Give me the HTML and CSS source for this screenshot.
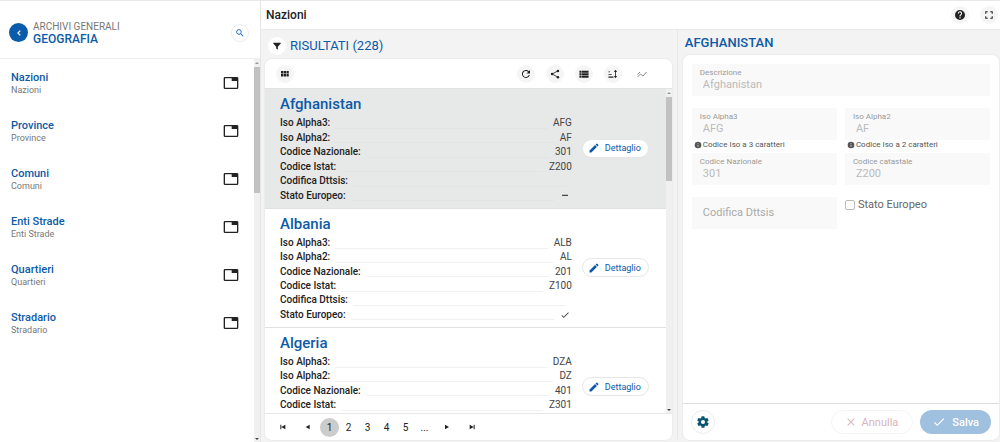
FILE: index.html
```html
<!DOCTYPE html>
<html lang="it">
<head>
<meta charset="utf-8">
<title>Nazioni</title>
<meta name="viewport" content="width=device-width, initial-scale=1">
<link rel="stylesheet" href="styles.css">
</head>
<body>
<svg class="sprite" aria-hidden="true">
  <symbol id="tab" viewBox="0 0 24 24"><path d="M21 3H3a2 2 0 0 0-2 2v14a2 2 0 0 0 2 2h18a2 2 0 0 0 2-2V5a2 2 0 0 0-2-2zm0 16H3V5h10v4h8v10z"/></symbol>
  <symbol id="pencil" viewBox="0 0 24 24"><path d="M3 17.2V21h3.8L17.8 9.900l-3.700-3.700zM20.700 7a1 1 0 0 0 0-1.400l-2.300-2.300a1 1 0 0 0-1.400 0l-1.900 1.800 3.800 3.800z"/></symbol>
  <symbol id="check" viewBox="0 0 24 24"><path d="M9 16.2 4.800 12l-1.400 1.400L9 19 21 7l-1.400-1.400z"/></symbol>
  <symbol id="info" viewBox="0 0 24 24"><path d="M12 2a10 10 0 1 0 0 20 10 10 0 0 0 0-20zm1 15h-2v-6h2zm0-8h-2V7h2z"/></symbol>
</svg>
<div class="app">
  <aside class="sidebar">
    <header class="side-head">
      <button class="back" aria-label="Indietro"><svg class="icon-10" viewBox="0 0 24 24"><path d="M15.4 7.4 14 6l-6 6 6 6 1.4-1.4L10.8 12z" stroke="currentColor" stroke-width="1"/></svg></button>
      <div class="side-titles">
        <p class="side-over">ARCHIVI GENERALI</p>
        <h2 class="side-title">GEOGRAFIA</h2>
      </div>
      <button class="round outlined blue" aria-label="Cerca"><svg class="icon-10" viewBox="0 0 24 24"><path d="M15.5 14h-.8l-.3-.3a6.5 6.5 0 1 0-.7.7l.3.3v.8l5 5 1.5-1.5zm-6 0a4.5 4.5 0 1 1 0-9 4.5 4.5 0 0 1 0 9z"/></svg></button>
    </header>
    <div class="scroller">
      <nav class="menu">
        <div class="menu-row"><a class="menu-link" href="#nazioni"><strong>Nazioni</strong><span>Nazioni</span></a><button class="tab-btn" aria-label="Apri Nazioni in una scheda"><svg class="icon-16"><use href="#tab"/></svg></button></div>
        <div class="menu-row"><a class="menu-link" href="#province"><strong>Province</strong><span>Province</span></a><button class="tab-btn" aria-label="Apri Province in una scheda"><svg class="icon-16"><use href="#tab"/></svg></button></div>
        <div class="menu-row"><a class="menu-link" href="#comuni"><strong>Comuni</strong><span>Comuni</span></a><button class="tab-btn" aria-label="Apri Comuni in una scheda"><svg class="icon-16"><use href="#tab"/></svg></button></div>
        <div class="menu-row"><a class="menu-link" href="#enti"><strong>Enti Strade</strong><span>Enti Strade</span></a><button class="tab-btn" aria-label="Apri Enti Strade in una scheda"><svg class="icon-16"><use href="#tab"/></svg></button></div>
        <div class="menu-row"><a class="menu-link" href="#quartieri"><strong>Quartieri</strong><span>Quartieri</span></a><button class="tab-btn" aria-label="Apri Quartieri in una scheda"><svg class="icon-16"><use href="#tab"/></svg></button></div>
        <div class="menu-row"><a class="menu-link" href="#stradario"><strong>Stradario</strong><span>Stradario</span></a><button class="tab-btn" aria-label="Apri Stradario in una scheda"><svg class="icon-16"><use href="#tab"/></svg></button></div>
      </nav>
      <div class="bar" aria-hidden="true"><i class="up"></i><i class="thumb side-thumb"></i><i class="down"></i></div>
    </div>
  </aside>

  <main class="main">
    <header class="topbar">
      <h1 class="page-title">Nazioni</h1>
      <button class="round" aria-label="Aiuto"><svg class="icon-12" viewBox="0 0 24 24"><path d="M12 2a10 10 0 1 0 0 20 10 10 0 0 0 0-20zm1.200 17h-2.400v-2.400h2.400zm2.300-7.800-.9.900c-.9.900-1.400 1.500-1.400 3h-2.400v-.6c0-1.100.5-2.100 1.200-2.800l1.300-1.300A2 2 0 1 0 10 9H7.700a4.300 4.300 0 1 1 7.800 2.200z"/></svg></button>
      <button class="round" aria-label="Schermo intero"><svg class="icon-10" viewBox="0 0 24 24"><path d="M3 3h6v2.500H5.500V9H3zm12 0h6v6h-2.500V5.500H15zM3 15h2.500v3.500H9V21H3zm15.500 0H21v6h-6v-2.500h3.500z"/></svg></button>
    </header>

    <div class="panes">
      <section class="results">
        <div class="results-head">
          <button class="round white" aria-label="Filtra"><svg class="icon-10" viewBox="0 0 24 24"><path d="M3 4h18v2l-7 8v7l-4-3v-4L3 6z"/></svg></button>
          <h2 class="pane-title">RISULTATI (228)</h2>
        </div>
        <div class="card">
          <div class="toolbar">
            <button class="round first" aria-label="Griglia"><svg class="icon-12" viewBox="0 0 24 24"><path d="M4 6h4.500v5H4zm5.500 0H14v5H9.500zm5.500 0h4.500v5H15zM4 12h4.500v5H4zm5.500 0H14v5H9.500zm5.500 0h4.500v5H15z"/></svg></button>
            <button class="round" aria-label="Aggiorna"><svg class="icon-12" viewBox="0 0 24 24"><path d="M17.700 6.300A8 8 0 1 0 19.700 14h-2.100a6 6 0 1 1-1.400-6.200L13 11h7V4z"/></svg></button>
            <button class="round" aria-label="Condividi"><svg class="icon-10" viewBox="0 0 24 24"><path d="m19 4.500-14 7.500 14 7.500" fill="none" stroke="currentColor" stroke-width="2"/><circle cx="19" cy="4.500" r="3"/><circle cx="5" cy="12" r="3"/><circle cx="19" cy="19.500" r="3"/></svg></button>
            <button class="round" aria-label="Elenco"><svg class="icon-10" viewBox="0 0 24 24"><path d="M1 4h4v5H1zm5 0h17v5H6zM1 10h4v5H1zm5 0h17v5H6zM1 16h4v5H1zm5 0h17v5H6z"/></svg></button>
            <button class="round" aria-label="Ordina"><svg class="icon-10" viewBox="0 0 24 24"><path d="M1 6h4v2H1zm0 6h8v2H1zm0 6h12v3H1zM17 7h-3l4-5 4 5h-3v10h3l-4 5-4-5h3z"/></svg></button>
            <button class="round muted" aria-label="Grafico" disabled><svg class="icon-12" viewBox="0 0 24 24"><path d="m3 18 6-6 5 4 7-8M3 13l5-5" fill="none" stroke="currentColor" stroke-width="2"/></svg></button>
          </div>
          <div class="scroller">
            <div class="list">
              <article class="item selected">
                <div class="item-body">
                  <h3 class="item-title">Afghanistan</h3>
                  <dl class="facts">
                    <div><dt>Iso Alpha3:</dt><dd>AFG</dd></div>
                    <div><dt>Iso Alpha2:</dt><dd>AF</dd></div>
                    <div><dt>Codice Nazionale:</dt><dd>301</dd></div>
                    <div><dt>Codice Istat:</dt><dd>Z200</dd></div>
                    <div><dt>Codifica Dttsis:</dt><dd></dd></div>
                    <div><dt>Stato Europeo:</dt><dd class="mark"><svg class="icon-10" viewBox="0 0 24 24" role="img" aria-label="No"><path d="M5 9h14v3H5z"/></svg></dd></div>
                  </dl>
                </div>
                <button class="detail-btn"><svg class="icon-12"><use href="#pencil"/></svg>Dettaglio</button>
              </article>
              <article class="item">
                <div class="item-body">
                  <h3 class="item-title">Albania</h3>
                  <dl class="facts">
                    <div><dt>Iso Alpha3:</dt><dd>ALB</dd></div>
                    <div><dt>Iso Alpha2:</dt><dd>AL</dd></div>
                    <div><dt>Codice Nazionale:</dt><dd>201</dd></div>
                    <div><dt>Codice Istat:</dt><dd>Z100</dd></div>
                    <div><dt>Codifica Dttsis:</dt><dd></dd></div>
                    <div><dt>Stato Europeo:</dt><dd class="mark"><svg class="icon-10" role="img" aria-label="Sì"><use href="#check"/></svg></dd></div>
                  </dl>
                </div>
                <button class="detail-btn"><svg class="icon-12"><use href="#pencil"/></svg>Dettaglio</button>
              </article>
              <article class="item">
                <div class="item-body">
                  <h3 class="item-title">Algeria</h3>
                  <dl class="facts">
                    <div><dt>Iso Alpha3:</dt><dd>DZA</dd></div>
                    <div><dt>Iso Alpha2:</dt><dd>DZ</dd></div>
                    <div><dt>Codice Nazionale:</dt><dd>401</dd></div>
                    <div><dt>Codice Istat:</dt><dd>Z301</dd></div>
                    <div></div>
                    <div></div>
                  </dl>
                </div>
                <button class="detail-btn"><svg class="icon-12"><use href="#pencil"/></svg>Dettaglio</button>
              </article>
            </div>
            <div class="bar" aria-hidden="true"><i class="up"></i><i class="thumb list-thumb"></i><i class="down"></i></div>
          </div>
          <nav class="pager" aria-label="Pagine">
            <button class="step" aria-label="Prima pagina"><svg class="icon-8" viewBox="0 0 24 24"><path d="M4 5h3v14H4zm15 0v14L7 12z"/></svg></button>
            <button class="step" aria-label="Pagina precedente"><svg class="icon-8" viewBox="0 0 24 24"><path d="M17 5v14L5 12z"/></svg></button>
            <button class="page current" aria-current="page">1</button>
            <button class="page">2</button>
            <button class="page">3</button>
            <button class="page">4</button>
            <button class="page">5</button>
            <button class="page">...</button>
            <button class="step" aria-label="Pagina successiva"><svg class="icon-8" viewBox="0 0 24 24"><path d="M6 5v14l12-7z"/></svg></button>
            <button class="step" aria-label="Ultima pagina"><svg class="icon-8" viewBox="0 0 24 24"><path d="M17 5h3v14h-3zM5 5v14l12-7z"/></svg></button>
          </nav>
        </div>
      </section>

      <section class="detail">
        <h2 class="pane-title detail-title">AFGHANISTAN</h2>
        <form class="card">
          <div class="fields">
            <div class="field wide"><label for="desc">Descrizione</label><input id="desc" value="Afghanistan" disabled></div>
            <div class="cell">
              <div class="field"><label for="a3">Iso Alpha3</label><input id="a3" value="AFG" disabled></div>
              <p class="hint"><svg class="icon-8"><use href="#info"/></svg>Codice Iso a 3 caratteri</p>
            </div>
            <div class="cell">
              <div class="field"><label for="a2">Iso Alpha2</label><input id="a2" value="AF" disabled></div>
              <p class="hint"><svg class="icon-8"><use href="#info"/></svg>Codice Iso a 2 caratteri</p>
            </div>
            <div class="field"><label for="naz">Codice Nazionale</label><input id="naz" value="301" disabled></div>
            <div class="field"><label for="cat">Codice catastale</label><input id="cat" value="Z200" disabled></div>
            <div class="field empty"><input id="dtt" aria-label="Codifica Dttsis" placeholder="Codifica Dttsis" disabled></div>
            <label class="check"><input type="checkbox" disabled>Stato Europeo</label>
          </div>
          <footer class="actions">
            <button type="button" class="round outlined large teal" aria-label="Impostazioni"><svg class="icon-14" viewBox="0 0 24 24"><path d="M19.400 13a7.500 7.500 0 0 0 0-2l2.100-1.600a.5.5 0 0 0 .1-.6l-2-3.500a.5.5 0 0 0-.6-.2l-2.500 1a7 7 0 0 0-1.700-1l-.4-2.700a.5.5 0 0 0-.5-.4h-4a.5.5 0 0 0-.5.4L9 5.100a8 8 0 0 0-1.700 1l-2.500-1a.5.5 0 0 0-.6.2l-2 3.500a.5.5 0 0 0 .1.600L4.500 11a7.500 7.500 0 0 0 0 2l-2.100 1.600a.5.5 0 0 0-.1.600l2 3.500c.1.200.4.300.6.200l2.500-1a7 7 0 0 0 1.700 1l.4 2.700c0 .2.200.4.500.4h4c.2 0 .5-.2.5-.4l.4-2.700a7 7 0 0 0 1.700-1l2.500 1c.2.100.5 0 .6-.2l2-3.500a.5.500 0 0 0-.1-.6zM12 15.500a3.500 3.500 0 1 1 0-7 3.500 3.500 0 0 1 0 7z"/></svg></button>
            <button type="button" class="pill cancel" disabled><svg class="icon-10" viewBox="0 0 24 24"><path d="m4 4 16 16M20 4 4 20" stroke="currentColor" stroke-width="2.500"/></svg>Annulla</button>
            <button type="button" class="pill save" disabled><svg class="icon-14"><use href="#check"/></svg>Salva</button>
          </footer>
        </form>
      </section>
    </div>
  </main>
</div>
</body>
</html>
```
FILE: styles.css
```css
* { box-sizing: border-box; }

body {
  margin: 0;
  font-family: Roboto, "Liberation Sans", sans-serif;
  font-size: 10px;
  color: #333;
  background: #f3f3f3;
}

h1, h2, h3, p, dl, dd { margin: 0; }

button {
  font: inherit;
  color: inherit;
  border: 0;
  padding: 0;
  background: none;
  display: flex;
  align-items: center;
  justify-content: center;
}

input { font: inherit; margin: 0; }
svg { fill: currentColor; flex: none; }

.sprite { position: absolute; width: 0; height: 0; }
.icon-8 { width: 8px; height: 8px; }
.icon-10 { width: 10px; height: 10px; }
.icon-12 { width: 12px; height: 12px; }
.icon-14 { width: 14px; height: 14px; }
.icon-16 { width: 16px; height: 16px; }

.app {
  display: flex;
  height: 100vh;
  border-top: 1px solid #e8e8e8;
}

/* Round icon buttons */
.round {
  width: 18px;
  height: 18px;
  flex: none;
  border-radius: 50%;
  background: #f5f5f5;
  color: #222;
}
.white { background: #fff; }
.outlined { background: #fff; border: 1px solid #ececec; }
.large { width: 24px; height: 24px; }
.blue { color: #0d5fae; }
.teal { color: #0b5570; }
.muted { color: #888; background: none; }

/* Scroll areas */
.scroller { display: flex; flex: 1; min-height: 0; overflow: hidden; }
.bar {
  width: 6px;
  flex: none;
  display: flex;
  flex-direction: column;
  align-items: center;
  background: #f0f0f0;
}
.up, .down { border: 2px solid transparent; }
.up { border-bottom-color: #999; margin: 1px 0 3px; }
.down { border-top-color: #444; margin-top: auto; }
.thumb { width: 6px; background: #c1c1c1; }
.side-thumb { height: 33%; }
.list-thumb { height: 26%; }

/* Sidebar */
.sidebar {
  flex: 0 0 26%;
  display: flex;
  flex-direction: column;
  background: #fff;
}
.side-head {
  display: flex;
  align-items: center;
  gap: 5px;
  height: 58px;
  padding: 6px 11px 0 9px;
  border-bottom: 1px solid #eee;
}
.back {
  width: 19px;
  height: 19px;
  border-radius: 50%;
  background: #0a5cab;
  color: #fff;
}
.side-titles { flex: 1; line-height: 12px; }
.side-over { font-size: 10px; color: #777; }
.side-title { font-size: 12px; font-weight: 500; color: #0d5aa7; }

.menu { flex: 1; }
.menu-row {
  display: flex;
  align-items: center;
  height: 48px;
  padding: 0 15px 0 11px;
}
.menu-link {
  flex: 1;
  display: flex;
  flex-direction: column;
  padding-top: 1px;
  font-size: 9px;
  line-height: 12px;
  color: #777;
  text-decoration: none;
}
.menu-link strong { font-size: 11px; font-weight: 500; color: #0d5aa7; }
.tab-btn { color: #222; }

/* Main area */
.main {
  flex: 1;
  min-width: 0;
  display: flex;
  flex-direction: column;
  border-left: 1px solid #e6e6e6;
}
.topbar {
  display: flex;
  align-items: center;
  gap: 11px;
  height: 29px;
  padding: 0 2px 0 5px;
  background: #fff;
  border-bottom: 1px solid #e8e8e8;
}
.page-title { flex: 1; font-size: 12px; font-weight: 500; color: #222; }

.panes { display: flex; flex: 1; min-height: 0; padding-bottom: 1px; }
.pane-title { font-size: 13px; line-height: 16px; font-weight: 400; color: #0d5aa7; }
.card {
  flex: 1;
  min-height: 0;
  display: flex;
  flex-direction: column;
  overflow: hidden;
  background: #fff;
  border: 1px solid #ececec;
  border-radius: 8px;
}

/* Results */
.results {
  flex: 0 0 calc(56% + 3px);
  display: flex;
  flex-direction: column;
  padding: 0 4px 0 3px;
  border-right: 1px solid #e8e8e8;
}
.results-head { display: flex; align-items: center; gap: 4px; height: 28px; padding: 4px 4px 0; }

.toolbar {
  display: flex;
  align-items: center;
  gap: 11px;
  height: 30px;
  padding: 0 21px 0 11px;
  border-bottom: 1px solid #e2e2e2;
}
.first { margin-right: auto; }

.list { flex: 1; min-width: 0; }
.item {
  display: flex;
  align-items: center;
  gap: 10px;
  height: 120px;
  padding: 4px 17px 5px 15px;
  border-bottom: 1px solid #e2e2e2;
}
.item + .item { height: 119px; }
.selected { background: #e7e8e8; }
.item-body { flex: 1; height: 100%; display: flex; flex-direction: column; }
.item-title { font-size: 15px; line-height: 22px; font-weight: 500; color: #0d5aa7; padding-bottom: 1px; }
.facts { flex: 1; display: grid; grid-auto-rows: 1fr; }
.facts div { display: flex; align-items: center; line-height: 14px; }
.facts dt { font-weight: 500; color: #222; }
.facts dd { flex: 1; display: flex; align-items: center; color: #444; }
.facts dd::before {
  content: "";
  flex: 1;
  margin: 10px 6px 0 5px;
  border-top: 1px solid #f1f1f1;
}
.selected dd::before { border-color: #e2e3e3; }
.mark { padding-right: 2px; }
.detail-btn {
  width: 67px;
  height: 19px;
  gap: 5px;
  padding-right: 2px;
  flex: none;
  border: 1px solid #e6e6e6;
  border-radius: 10px;
  background: #fff;
  font-size: 9px;
  color: #0d5aa7;
}

.pager {
  display: flex;
  align-items: center;
  height: 27px;
  padding-left: 8px;
  border-top: 1px solid #e8e8e8;
  color: #222;
}
.step { width: 19px; height: 19px; }
.page { width: 19px; height: 19px; border-radius: 50%; }
.step + .step { margin-left: 6px; }
.step + .page { margin-left: 3px; }
.page + .step { margin-left: 3px; }
.current { background: #ccc; }

/* Detail form */
.detail { flex: 1; min-width: 0; display: flex; flex-direction: column; padding-left: 4px; }
.detail-title { padding: 5px 0 3px 3px; font-weight: 500; }
.fields {
  flex: 1;
  display: grid;
  grid-template-columns: 1fr 1fr;
  align-content: start;
  column-gap: 8px;
  padding: 9px;
}
.wide { grid-column: 1 / -1; }
.field {
  height: 32px;
  display: flex;
  flex-direction: column;
  margin-bottom: 12px;
  padding: 3px 8px;
  background: #f9f9f9;
}
.cell .field { margin-bottom: 0; }
.field label { font-size: 8px; line-height: 12px; color: #999; }
.field input {
  width: 100%;
  padding: 0 3px;
  border: 0;
  background: none;
  font-size: 11px;
  line-height: 12px;
  color: #bbb;
}
.field input::placeholder { color: #aaa; opacity: 1; }
.empty { justify-content: center; }
.hint {
  display: flex;
  align-items: center;
  gap: 1px;
  padding: 0 0 4px 2px;
  font-size: 8px;
  line-height: 9px;
  color: #555;
}
.check { display: flex; align-items: center; align-self: start; gap: 3px; font-size: 11px; line-height: 16px; color: #666; }
.check input {
  appearance: none;
  width: 10px;
  height: 10px;
  border: 1px solid #bbb;
  border-radius: 2px;
  background: #fff;
}

.actions {
  display: flex;
  align-items: center;
  gap: 7px;
  height: 37px;
  padding: 0 8px;
  border-top: 1px solid #ddd;
}
.actions .round { margin-right: auto; }
.pill { height: 24px; padding: 0 12px; gap: 6px; border-radius: 12px; font-size: 11px; }
.cancel { border: 1px solid #f4f4f4; padding: 0 14px; color: #d5b5b9; }
.save { background: #9fc0de; color: #fff; font-weight: 500; }
```
